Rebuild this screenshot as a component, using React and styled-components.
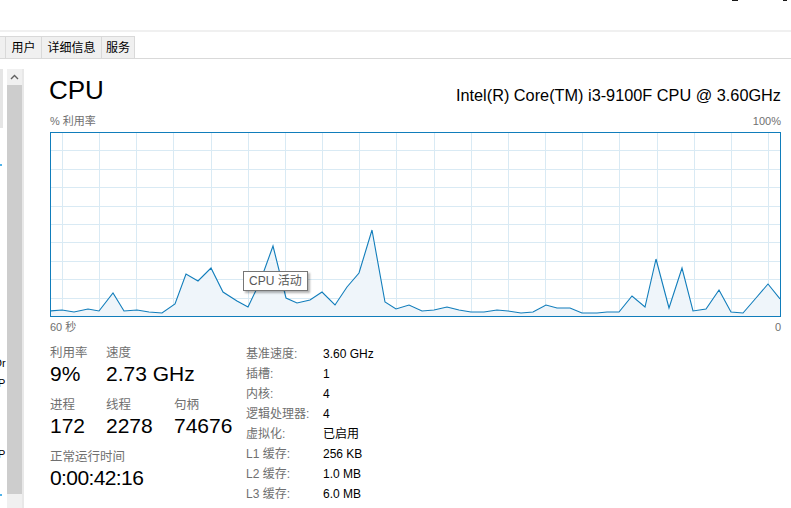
import React from "react";
import styled, { createGlobalStyle } from "styled-components";

const FONT = `"Liberation Sans", "Noto Sans CJK SC", sans-serif`;

const GlobalStyle = createGlobalStyle`
  html, body { margin: 0; padding: 0; background: #fff; }
  body { width: 791px; height: 508px; overflow: hidden; font-family: ${FONT}; color: #000; }
  * { box-sizing: border-box; }
`;

const Window = styled.div`
  width: 791px;
  height: 508px;
  display: flex;
  flex-direction: column;
  overflow: hidden;
`;

const MenuBar = styled.div`
  height: 32px;
  flex: none;
  border-bottom: 2px solid #f0f0f0;
  display: flex;
  justify-content: flex-end;
  align-items: flex-start;
  gap: 45px;
  padding-right: 4px;
`;

const WinMark = styled.span`
  display: block;
  width: ${(p) => p.$w}px;
  height: 1px;
  background: #1a1a1a;
`;

const TabStrip = styled.div`
  margin-top: 4px;
  height: 23px;
  flex: none;
  display: flex;
  border-bottom: 1px solid #d9d9d9;
`;

const Tab = styled.div`
  width: ${(p) => p.$w}px;
  height: 22px;
  background: #f0f0f0;
  border-top: 1px solid #d9d9d9;
  border-right: 1px solid #d9d9d9;
  display: flex;
  align-items: center;
  justify-content: center;
  font-size: 12px;
  line-height: 20px;
  color: #000;
  white-space: nowrap;
  overflow: hidden;
`;

const Main = styled.div`
  flex: 1;
  min-height: 0;
  display: flex;
`;

const SidePane = styled.div`
  width: 7px;
  flex: none;
  padding-top: 10px;
  display: flex;
  flex-direction: column;
  overflow: hidden;
`;

const SelBlock = styled.div`
  width: 3px;
  height: 59px;
  background: #e5e5e5;
`;

const BlueDot = styled.div`
  margin-top: ${(p) => p.$mt}px;
  width: 2px;
  height: 2px;
  background: #4fb3ea;
`;

const SideText = styled.div`
  margin-top: ${(p) => p.$mt}px;
  margin-left: ${(p) => p.$ml}px;
  font-size: 11px;
  line-height: 12px;
  color: #000;
  white-space: nowrap;
`;

const Scrollbar = styled.div`
  width: 17px;
  flex: none;
  margin-top: 10px;
  display: flex;
  flex-direction: column;
  background: #f0f0f0;
  border-right: 2px solid #e8e8e8;
`;

const ScrollButton = styled.div`
  height: 16px;
  display: flex;
  align-items: center;
  justify-content: center;
`;

const Thumb = styled.div`
  height: 409px;
  background: #cdcdcd;
`;

const Content = styled.div`
  flex: 1;
  min-width: 0;
  padding: 16px 10px 0 26px;
  display: flex;
  flex-direction: column;
`;

const Header = styled.div`
  display: flex;
  justify-content: space-between;
  align-items: flex-start;
`;

const Title = styled.div`
  margin-left: -1px;
  font-size: 26px;
  line-height: 30px;
  height: 30px;
  color: #000;
`;

const Model = styled.div`
  margin-top: 10px;
  font-size: 16.3px;
  line-height: 20px;
  color: #000;
  white-space: nowrap;
`;

const AxisRow = styled.div`
  margin-top: ${(p) => p.$mt}px;
  display: flex;
  justify-content: space-between;
  font-size: 11px;
  line-height: 14px;
  height: 14px;
  color: #707070;
`;

const ChartBox = styled.div`
  position: relative;
  margin-top: 4px;
  width: 731px;
  height: 185px;
  border: 1px solid #117dbb;
  background: #fff;
`;

const ChartSvg = styled.svg`
  display: block;
  width: 729px;
  height: 183px;
`;

const Tooltip = styled.div`
  position: absolute;
  left: 192px;
  top: 138px;
  height: 20px;
  padding: 0 5px;
  border: 1px solid #767676;
  background: #fff;
  box-shadow: 2px 2px 2px rgba(0, 0, 0, 0.3);
  font-size: 12px;
  line-height: 18px;
  color: #575757;
  white-space: nowrap;
`;

const Stats = styled.div`
  margin-top: 11px;
  display: flex;
`;

const LeftStats = styled.div`
  width: 196px;
  flex: none;
  display: grid;
  grid-template-columns: 56px 68px auto;
  row-gap: 11px;
  align-content: start;
`;

const Group = styled.div`
  grid-column: ${(p) => p.$span || "auto"};
  display: flex;
  flex-direction: column;
  white-space: nowrap;
`;

const StatLabel = styled.div`
  font-size: 12.5px;
  line-height: 17px;
  color: #707070;
`;

const StatValue = styled.div`
  font-size: 21px;
  line-height: 24px;
  color: #000;
  letter-spacing: ${(p) => p.$ls || 0}px;
`;

const InfoList = styled.div`
  margin-top: -1px;
  display: grid;
  grid-template-columns: 77px auto;
  font-size: 12px;
  line-height: 20px;
  align-content: start;
`;

const InfoKey = styled.div`
  color: #707070;
  white-space: nowrap;
`;

const InfoVal = styled.div`
  color: #000;
  white-space: nowrap;
`;

const points = [
  [50, 311], [62, 310], [74, 312], [88, 309], [99, 311], [113, 293], [124, 311],
  [137, 310], [149, 312], [162, 313], [175, 304], [186, 274], [198, 281], [211, 268],
  [223, 292], [237, 301], [248, 307], [260, 282], [273, 246], [286, 298], [297, 303],
  [310, 300], [322, 292], [335, 305], [347, 287], [359, 273], [372, 230], [385, 302],
  [396, 309], [409, 305], [422, 311], [434, 310], [447, 307], [459, 310], [471, 312],
  [484, 312], [497, 310], [508, 311], [521, 313], [533, 312], [546, 305], [557, 308],
  [570, 308], [582, 313], [597, 313], [607, 312], [619, 312], [632, 296], [645, 307],
  [656, 259], [669, 308], [682, 268], [693, 311], [706, 309], [719, 290], [731, 312],
  [743, 313], [756, 298], [768, 284], [780, 299],
];

const vLines = Array.from({ length: 20 }, (_, k) => Math.round(62 + 37.16 * k) + 0.5);
const hLines = Array.from({ length: 9 }, (_, k) => Math.round(132 + 18.4 * (k + 1)) + 0.5);

function CpuChart() {
  const line = points.map((p) => p.join(",")).join(" ");
  const area = `51,317 ${line} 780,317`;
  return (
    <ChartSvg viewBox="51 133 729 183">
      {vLines.map((x) => (
        <line key={"v" + x} x1={x} y1={133} x2={x} y2={316} stroke="#d9eaf4" strokeWidth="1" />
      ))}
      {hLines.map((y) => (
        <line key={"h" + y} x1={51} y1={y} x2={780} y2={y} stroke="#d9eaf4" strokeWidth="1" />
      ))}
      <polygon points={area} fill="#eff5fa" />
      <polyline points={line} fill="none" stroke="#117dbb" strokeWidth="1.1" strokeLinejoin="miter" />
    </ChartSvg>
  );
}

const info = [
  ["基准速度:", "3.60 GHz"],
  ["插槽:", "1"],
  ["内核:", "4"],
  ["逻辑处理器:", "4"],
  ["虚拟化:", "已启用"],
  ["L1 缓存:", "256 KB"],
  ["L2 缓存:", "1.0 MB"],
  ["L3 缓存:", "6.0 MB"],
];

export default function App() {
  return (
    <>
      <GlobalStyle />
      <Window>
        <MenuBar>
          <WinMark $w={6} />
          <WinMark $w={4} />
        </MenuBar>
        <TabStrip>
          <Tab $w={6} />
          <Tab $w={36}>用户</Tab>
          <Tab $w={60}>详细信息</Tab>
          <Tab $w={33}>服务</Tab>
        </TabStrip>
        <Main>
          <SidePane>
            <SelBlock />
            <BlueDot $mt={36} />
            <SideText $mt={191} $ml={-6}>Dr</SideText>
            <SideText $mt={8} $ml={-2}>P</SideText>
            <SideText $mt={59} $ml={-2}>P</SideText>
            <BlueDot $mt={34} />
          </SidePane>
          <Scrollbar>
            <ScrollButton>
              <svg width="9" height="6" viewBox="0 0 9 6">
                <path d="M1 5 L4.5 1.5 L8 5" fill="none" stroke="#606060" strokeWidth="1.4" />
              </svg>
            </ScrollButton>
            <Thumb />
          </Scrollbar>
          <Content>
            <Header>
              <Title>CPU</Title>
              <Model>Intel(R) Core(TM) i3-9100F CPU @ 3.60GHz</Model>
            </Header>
            <AxisRow $mt={9}>
              <span>% 利用率</span>
              <span>100%</span>
            </AxisRow>
            <ChartBox>
              <CpuChart />
              <Tooltip>CPU 活动</Tooltip>
            </ChartBox>
            <AxisRow $mt={3}>
              <span>60 秒</span>
              <span>0</span>
            </AxisRow>
            <Stats>
              <LeftStats>
                <Group>
                  <StatLabel>利用率</StatLabel>
                  <StatValue>9%</StatValue>
                </Group>
                <Group $span="2 / 4">
                  <StatLabel>速度</StatLabel>
                  <StatValue>2.73 GHz</StatValue>
                </Group>
                <Group>
                  <StatLabel>进程</StatLabel>
                  <StatValue>172</StatValue>
                </Group>
                <Group>
                  <StatLabel>线程</StatLabel>
                  <StatValue>2278</StatValue>
                </Group>
                <Group>
                  <StatLabel>句柄</StatLabel>
                  <StatValue>74676</StatValue>
                </Group>
                <Group $span="1 / 4">
                  <StatLabel>正常运行时间</StatLabel>
                  <StatValue $ls={-0.6}>0:00:42:16</StatValue>
                </Group>
              </LeftStats>
              <InfoList>
                {info.map(([k, v]) => (
                  <React.Fragment key={k}>
                    <InfoKey>{k}</InfoKey>
                    <InfoVal>{v}</InfoVal>
                  </React.Fragment>
                ))}
              </InfoList>
            </Stats>
          </Content>
        </Main>
      </Window>
    </>
  );
}
